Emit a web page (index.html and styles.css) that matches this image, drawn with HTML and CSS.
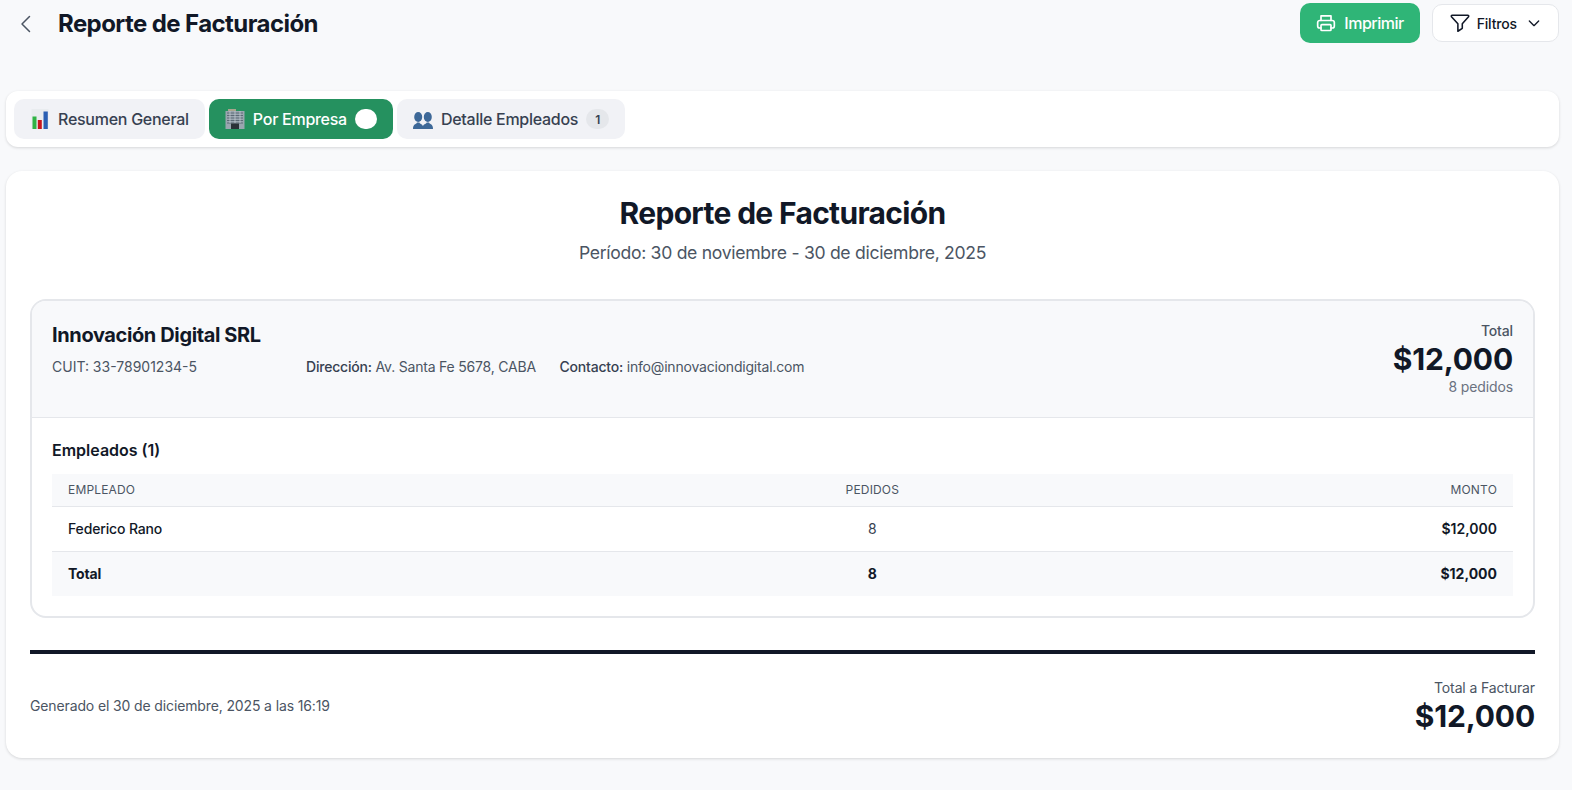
FILE: index.html
```html
<!DOCTYPE html>
<html lang="es">
<head>
<meta charset="utf-8">
<title>Reporte de Facturación</title>
<link rel="stylesheet" href="styles.css">
</head>
<body>
<div class="page">
  <header class="topbar">
    <div class="topbar-left">
      <svg class="back" width="24" height="24" viewBox="0 0 24 24" fill="none" stroke="currentColor" stroke-width="1.5" stroke-linecap="round" stroke-linejoin="round"><path d="M15.500 19.500 8 12l7.500-7.500"/></svg>
      <h1 class="page-title">Reporte de Facturación</h1>
    </div>
    <div class="topbar-right">
      <button class="btn-print">
        <svg width="20" height="20" viewBox="0 0 24 24" fill="none" stroke="currentColor" stroke-width="2" stroke-linecap="round" stroke-linejoin="round"><path d="M6 9V3.500h12V9"/><path d="M6 18H4.500A2.500 2.500 0 0 1 2 15.500v-4A2.500 2.500 0 0 1 4.500 9h15a2.500 2.500 0 0 1 2.500 2.500v4a2.500 2.500 0 0 1-2.500 2.500H18"/><rect x="6" y="14" width="12" height="7" rx="1"/></svg>
        Imprimir
      </button>
      <button class="btn-filter">
        <svg width="22" height="22" viewBox="0 0 24 24" fill="none" stroke="currentColor" stroke-width="1.700" stroke-linecap="round" stroke-linejoin="round"><path d="M3.500 3.500h17a1 1 0 0 1 .8 1.600L14.500 12.800v5l-4.800 3.200v-8.200L2.700 5.100a1 1 0 0 1 .8-1.600z"/></svg>
        Filtros
        <svg class="chev" width="16" height="16" viewBox="0 0 24 24" fill="none" stroke="currentColor" stroke-width="2" stroke-linecap="round" stroke-linejoin="round"><path d="m5 9 7 7 7-7"/></svg>
      </button>
    </div>
  </header>

  <nav class="tabs">
    <div class="tab">
      <svg class="emoji" viewBox="0 0 20 22"><rect x="1.500" y="1" width="17" height="20" fill="#e9ecef"/><rect x="2.500" y="8.500" width="4" height="12.500" fill="#2fb344"/><rect x="7.800" y="12" width="4" height="9" fill="#c8161d"/><rect x="13.500" y="3.500" width="4.300" height="17.500" fill="#2b5fb3"/></svg>
      Resumen General
    </div>
    <div class="tab tab-active">
      <svg class="emoji" viewBox="0 0 20 22"><rect x="3" y="1" width="8" height="2" fill="#a8a58e"/><rect x="0.500" y="3" width="19" height="18" fill="#9aa6b0"/><path d="M2 5h16M2 7.500h16M2 10h16M2 12.500h16M2 15h16" stroke="#5c6a76" stroke-width="1"/><path d="M5 3v12M10 3v12M15 3v12" stroke="#c3ccd3" stroke-width=".8"/><rect x="6" y="15.500" width="8" height="5.500" fill="#2b3238"/></svg>
      Por Empresa
      <span class="pill pill-active"></span>
    </div>
    <div class="tab">
      <svg class="emoji" viewBox="0 0 20 22"><g fill="#3d6898"><ellipse cx="5.200" cy="9" rx="4" ry="5"/><path d="M0 21c0-2.500.6-4 2.500-5 1-.5 1.500-1 1.500-1.500h2.400c0 .5.500 1 1.500 1.500 1.900 1 2.600 2.500 2.600 5z"/><ellipse cx="14.800" cy="9" rx="4" ry="5"/><path d="M9.400 21c0-2.500.7-4 2.600-5 1-.5 1.600-1 1.600-1.500H16c0 .5.500 1 1.500 1.500 1.900 1 2.500 2.500 2.500 5z"/></g></svg>
      Detalle Empleados
      <span class="pill">1</span>
    </div>
  </nav>

  <main class="report">
    <div class="report-head">
      <h2 class="report-title">Reporte de Facturación</h2>
      <p class="report-period">Período: 30 de noviembre - 30 de diciembre, 2025</p>
    </div>

    <section class="company">
      <div class="company-head">
        <div class="company-info">
          <h3 class="company-name">Innovación Digital SRL</h3>
          <div class="company-meta">
            <span class="meta-cuit">CUIT: 33-78901234-5</span>
            <span><b>Dirección:</b> Av. Santa Fe 5678, CABA</span>
            <span><b>Contacto:</b> info@innovaciondigital.com</span>
          </div>
        </div>
        <div class="company-total">
          <div class="total-label">Total</div>
          <div class="total-value">$12,000</div>
          <div class="total-orders">8 pedidos</div>
        </div>
      </div>
      <div class="company-body">
        <h4 class="emp-title">Empleados (1)</h4>
        <table class="emp-table">
          <thead>
            <tr><th class="col-name">Empleado</th><th class="col-orders">Pedidos</th><th class="col-amount">Monto</th></tr>
          </thead>
          <tbody>
            <tr><td class="col-name cell-name">Federico Rano</td><td class="col-orders">8</td><td class="col-amount cell-strong">$12,000</td></tr>
          </tbody>
          <tfoot>
            <tr><td class="col-name">Total</td><td class="col-orders">8</td><td class="col-amount">$12,000</td></tr>
          </tfoot>
        </table>
      </div>
    </section>

    <footer class="report-foot">
      <div class="generated">Generado el 30 de diciembre, 2025 a las 16:19</div>
      <div class="grand">
        <div class="grand-label">Total a Facturar</div>
        <div class="grand-value">$12,000</div>
      </div>
    </footer>
  </main>
</div>
</body>
</html>
```
FILE: styles.css
```css
* { box-sizing: border-box; }
html, body { margin: 0; padding: 0; }
body { background: #f8f9fb; font-family: Inter, "Liberation Sans", sans-serif; color: #111827; }
.page { padding: 0 13px 0 6px; height: 790px; overflow: hidden; }

.topbar { display: flex; justify-content: space-between; align-items: center; height: 46px; }
.topbar-left { display: flex; align-items: center; gap: 20px; padding: 2px 0 0 8px; }
.back { color: #4b5563; }
.page-title { margin: 0; font-size: 24px; line-height: 32px; font-weight: 700; letter-spacing: -0.58px; color: #111827; }
.topbar-right { display: flex; align-items: center; gap: 12px; }
.btn-print { display: flex; align-items: center; gap: 8px; height: 40px; padding: 0 16px; border: 0; border-radius: 10px; background: #2fb577; color: #fff; font: 500 16px Inter, sans-serif; letter-spacing: -0.5px; }
.btn-filter { display: flex; align-items: center; gap: 6px; height: 38px; padding: 0 16px; border: 1px solid #e5e7eb; border-radius: 10px; background: #fff; color: #111827; font: 500 14px Inter, sans-serif; letter-spacing: -0.15px; }
.chev { margin-left: 3px; }

.tabs { display: flex; gap: 4px; margin-top: 45px; height: 56px; padding: 8px; background: #fff; border-radius: 12px; box-shadow: 0 1px 3px rgba(0,0,0,.14); }
.tab { display: flex; align-items: center; gap: 8px; height: 40px; padding: 0 16px; border-radius: 10px; background: #f1f2f6; color: #374151; font-size: 16px; font-weight: 500; letter-spacing: -0.27px; }
.tab-active { background: #25915f; color: #fff; }
.emoji { width: 20px; height: 22px; flex: none; }
.pill { display: flex; align-items: center; justify-content: center; min-width: 23px; height: 20px; padding: 0 8px; border-radius: 10px; background: #e5e7eb; color: #374151; font-size: 12px; font-weight: 600; letter-spacing: 0; }
.pill-active { min-width: 22px; background: #fff; }

.report { margin-top: 24px; padding: 24px; height: 587px; background: #fff; border-radius: 16px; box-shadow: 0 1px 3px rgba(0,0,0,.14); }
.report-head { text-align: center; }
.report-title { margin: 0; font-size: 30px; line-height: 36px; font-weight: 700; letter-spacing: -0.68px; color: #111827; }
.report-period { margin: 8px 0 0; font-size: 17.6px; line-height: 28px; letter-spacing: -0.3px; color: #4b5563; }

.company { margin-top: 32px; border: 2px solid #e5e7eb; border-radius: 16px; overflow: hidden; }
.company-head { display: flex; justify-content: space-between; height: 117px; padding: 20px; background: #f8f9fb; border-bottom: 1px solid #e5e7eb; }
.company-name { margin: 0; font-size: 20px; line-height: 28px; font-weight: 650; letter-spacing: -0.38px; color: #111827; }
.company-meta { display: grid; grid-template-columns: 254px 253.500px auto; margin-top: 8px; font-size: 14px; line-height: 20px; letter-spacing: -0.2px; color: #4b5563; }
.company-meta b { font-weight: 500; color: #374151; }
.company-meta .meta-cuit { letter-spacing: 0; }
.company-total { text-align: right; }
.total-label { font-size: 14px; line-height: 20px; font-weight: 500; letter-spacing: -0.15px; color: #4b5563; }
.total-value { font-size: 30px; line-height: 36px; font-weight: 700; letter-spacing: -0.15px; color: #111827; }
.total-orders { font-size: 14px; line-height: 20px; letter-spacing: -0.12px; color: #6b7280; }

.company-body { padding: 20px; }
.emp-title { margin: 0 0 12px; font-size: 16px; line-height: 24px; font-weight: 600; color: #111827; }
.emp-table { width: 100%; border-collapse: collapse; font-size: 14px; table-layout: fixed; }
.emp-table th { height: 32px; padding: 0 16px; background: #f8f9fb; border-bottom: 1px solid #e5e7eb; font-size: 12px; font-weight: 400; text-transform: uppercase; letter-spacing: .17px; color: #4b5563; }
.emp-table td { height: 45px; padding: 0 16px; letter-spacing: -0.15px; }
.emp-table tbody td { border-bottom: 1px solid #e5e7eb; color: #374151; }
.emp-table tbody .cell-name, .emp-table tbody .cell-strong { color: #111827; font-weight: 500; }
.emp-table tbody .cell-strong { font-weight: 600; letter-spacing: 0; }
.emp-table tfoot td { background: #f8f9fb; font-weight: 700; color: #111827; }
.emp-table tfoot .col-amount { letter-spacing: 0; }
.col-name { text-align: left; width: 48.050%; }
.col-orders { text-align: center; width: 16.200%; }
.col-amount { text-align: right; }

.report-foot { display: flex; justify-content: space-between; align-items: center; margin-top: 32px; padding-top: 24px; border-top: 4px solid #111827; }
.generated { font-size: 14px; line-height: 20px; letter-spacing: -0.13px; color: #4b5563; }
.grand { text-align: right; }
.grand-label { font-size: 14px; line-height: 20px; letter-spacing: -0.13px; color: #4b5563; }
.grand-value { font-size: 30px; line-height: 36px; font-weight: 700; letter-spacing: -0.15px; color: #111827; }
```
